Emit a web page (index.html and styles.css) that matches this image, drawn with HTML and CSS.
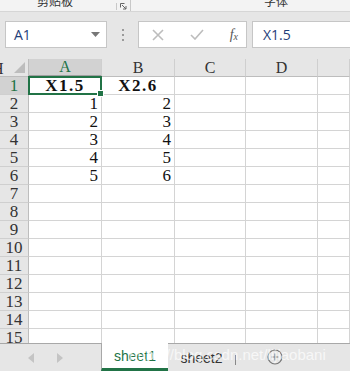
FILE: index.html
```html
<!DOCTYPE html>
<html lang="zh-CN">
  <head>
    <meta charset="UTF-8" />
    <meta name="viewport" content="width=device-width, initial-scale=1.0" />
    <title>Excel</title>
    <link rel="stylesheet" href="styles.css">
  </head>
  <body>
    <div class="app">
      <!-- Ribbon (cut off at the top) -->
      <div class="ribbon">
        <span class="ribbon__group ribbon__group--clip">剪贴板</span>
        <span class="ribbon__launcher">
          <svg width="7" height="7" viewBox="0 0 7 7"><path d="M0.5 0.5h4M0.5 0.5v4M2 2l4 4M6 3v3H3" fill="none" stroke="#666" stroke-width="1"/></svg>
        </span>
        <span class="ribbon__sep"></span>
        <span class="ribbon__group ribbon__group--font">字体</span>
      </div>

      <!-- Name box + formula bar -->
      <div class="formula-bar">
        <div class="name-box">
          <span class="name-box__text">A1</span>
          <svg class="name-box__arrow" width="9" height="5" viewBox="0 0 9 5"><path d="M0 0h9L4.5 5z" fill="#777"/></svg>
        </div>
        <div class="formula-bar__grip">
          <span></span><span></span><span></span>
        </div>
        <div class="formula-bar__buttons">
          <svg width="12" height="12" viewBox="0 0 12 12"><path d="M1 1l10 10M11 1L1 11" stroke="#bdbdbd" stroke-width="1.6"/></svg>
          <svg width="14" height="11" viewBox="0 0 14 11"><path d="M1 6l4 4 8-9" fill="none" stroke="#bdbdbd" stroke-width="1.6"/></svg>
          <span class="formula-bar__fx">f<sub>x</sub></span>
        </div>
        <div class="formula-bar__input">X1.5</div>
      </div>

      <!-- Grid -->
      <div class="sheet">
        <div class="sheet__corner"><span class="sheet__clip">H</span><span class="sheet__triangle"></span></div>
        <div class="sheet__col sheet__col--active">A</div>
        <div class="sheet__col">B</div>
        <div class="sheet__col">C</div>
        <div class="sheet__col">D</div>
        <div class="sheet__col"></div>

        <div class="sheet__row sheet__row--active">1</div>
        <div class="sheet__cell sheet__cell--head sheet__cell--selected">X1.5</div>
        <div class="sheet__cell sheet__cell--head">X2.6</div>
        <div class="sheet__cell"></div><div class="sheet__cell"></div><div class="sheet__cell"></div>

        <div class="sheet__row">2</div>
        <div class="sheet__cell">1</div><div class="sheet__cell">2</div>
        <div class="sheet__cell"></div><div class="sheet__cell"></div><div class="sheet__cell"></div>

        <div class="sheet__row">3</div>
        <div class="sheet__cell">2</div><div class="sheet__cell">3</div>
        <div class="sheet__cell"></div><div class="sheet__cell"></div><div class="sheet__cell"></div>

        <div class="sheet__row">4</div>
        <div class="sheet__cell">3</div><div class="sheet__cell">4</div>
        <div class="sheet__cell"></div><div class="sheet__cell"></div><div class="sheet__cell"></div>

        <div class="sheet__row">5</div>
        <div class="sheet__cell">4</div><div class="sheet__cell">5</div>
        <div class="sheet__cell"></div><div class="sheet__cell"></div><div class="sheet__cell"></div>

        <div class="sheet__row">6</div>
        <div class="sheet__cell">5</div><div class="sheet__cell">6</div>
        <div class="sheet__cell"></div><div class="sheet__cell"></div><div class="sheet__cell"></div>

        <div class="sheet__row">7</div>
        <div class="sheet__cell"></div><div class="sheet__cell"></div><div class="sheet__cell"></div><div class="sheet__cell"></div><div class="sheet__cell"></div>
        <div class="sheet__row">8</div>
        <div class="sheet__cell"></div><div class="sheet__cell"></div><div class="sheet__cell"></div><div class="sheet__cell"></div><div class="sheet__cell"></div>
        <div class="sheet__row">9</div>
        <div class="sheet__cell"></div><div class="sheet__cell"></div><div class="sheet__cell"></div><div class="sheet__cell"></div><div class="sheet__cell"></div>
        <div class="sheet__row">10</div>
        <div class="sheet__cell"></div><div class="sheet__cell"></div><div class="sheet__cell"></div><div class="sheet__cell"></div><div class="sheet__cell"></div>
        <div class="sheet__row">11</div>
        <div class="sheet__cell"></div><div class="sheet__cell"></div><div class="sheet__cell"></div><div class="sheet__cell"></div><div class="sheet__cell"></div>
        <div class="sheet__row">12</div>
        <div class="sheet__cell"></div><div class="sheet__cell"></div><div class="sheet__cell"></div><div class="sheet__cell"></div><div class="sheet__cell"></div>
        <div class="sheet__row">13</div>
        <div class="sheet__cell"></div><div class="sheet__cell"></div><div class="sheet__cell"></div><div class="sheet__cell"></div><div class="sheet__cell"></div>
        <div class="sheet__row">14</div>
        <div class="sheet__cell"></div><div class="sheet__cell"></div><div class="sheet__cell"></div><div class="sheet__cell"></div><div class="sheet__cell"></div>
        <div class="sheet__row">15</div>
        <div class="sheet__cell"></div><div class="sheet__cell"></div><div class="sheet__cell"></div><div class="sheet__cell"></div><div class="sheet__cell"></div>
      </div>

      <!-- Sheet tabs -->
      <div class="tabs">
        <div class="tabs__nav">
          <svg width="6" height="10" viewBox="0 0 6 10"><path d="M6 0v10L0 5z" fill="#c4c4c4"/></svg>
          <svg width="6" height="10" viewBox="0 0 6 10"><path d="M0 0v10l6-5z" fill="#c4c4c4"/></svg>
        </div>
        <div class="tabs__tab tabs__tab--active">sheet1</div>
        <div class="tabs__tab">sheet2</div>
        <span class="tabs__sep"></span>
        <svg class="tabs__add" width="16" height="16" viewBox="0 0 16 16"><circle cx="8" cy="8" r="7" fill="none" stroke="#777" stroke-width="1.2"/><path d="M8 4.5v7M4.5 8h7" stroke="#777" stroke-width="1.2"/></svg>
        <span class="tabs__watermark">https://blog.csdn.net/lijiaobani</span>
      </div>
    </div>
  </body>
</html>
```

FILE: styles.css
```css
/* Tổng quan */
html,
body {
  margin: 0;
  padding: 0;
}

body {
  width: 350px;
  height: 371px;
  overflow: hidden;
  background-color: #fff;
  font-family: "Liberation Sans", Arial, sans-serif;
}

.app {
  display: flex;
  flex-direction: column;
  height: 371px;
}

/* Ribbon */
.ribbon {
  display: flex;
  align-items: flex-end;
  height: 11px;
  overflow: hidden;
  background-color: #f3f3f3;
  border-bottom: 1px solid #d6d6d6;
  flex-shrink: 0;
}

.ribbon__group {
  margin-bottom: 3px;
  font-family: "Noto Sans CJK SC", sans-serif;
  font-size: 12px;
  line-height: 15px;
  color: #333;
  flex-shrink: 0;
}

.ribbon__group--clip {
  margin-left: 37px;
}

.ribbon__launcher {
  display: flex;
  margin-left: 43px;
  margin-bottom: 1px;
  padding-left: 3px;
  border-left: 1px solid #c8c8c8;
}

.ribbon__sep {
  width: 1px;
  height: 11px;
  margin-left: 3px;
  background-color: #c8c8c8;
}

.ribbon__group--font {
  margin-left: 133px;
}

/* Formula bar */
.formula-bar {
  display: flex;
  align-items: stretch;
  padding: 9px 0 11px 5px;
  background-color: #e6e6e6;
  flex-shrink: 0;
}

.name-box {
  display: flex;
  align-items: center;
  justify-content: space-between;
  box-sizing: border-box;
  width: 102px;
  height: 27px;
  padding: 0 6px 0 8px;
  background-color: #fff;
  border: 1px solid #c6c6c6;
}

.name-box__text {
  font-family: "Open Sans", "Liberation Sans", sans-serif;
  font-size: 14px;
  color: #1f3d7a;
}

.formula-bar__grip {
  display: flex;
  flex-direction: column;
  align-items: center;
  justify-content: center;
  gap: 3px;
  width: 31px;
}

.formula-bar__grip span {
  width: 2px;
  height: 2px;
  background-color: #9a9a9a;
}

.formula-bar__buttons {
  display: flex;
  align-items: center;
  justify-content: space-between;
  box-sizing: border-box;
  width: 109px;
  padding: 0 8px 0 13px;
  background-color: #fff;
  border: 1px solid #c6c6c6;
}

.formula-bar__fx {
  font-family: "Liberation Serif", serif;
  font-style: italic;
  font-size: 14px;
  color: #555;
}

.formula-bar__fx sub {
  font-size: 10px;
  vertical-align: -1px;
}

.formula-bar__input {
  display: flex;
  align-items: center;
  flex: 1;
  margin-left: 5px;
  padding-left: 10px;
  background-color: #fff;
  border: 1px solid #c6c6c6;
  border-right: none;
  font-family: "Open Sans", "Liberation Sans", sans-serif;
  font-size: 14px;
  color: #1f3d7a;
}

/* Lưới bảng tính */
.sheet {
  display: grid;
  grid-template-columns: 29px 73px 73px 71px 72px 1fr;
  grid-auto-rows: 18px;
  height: 284px;
  overflow: hidden;
  flex-shrink: 0;
  font-family: "Liberation Serif", "Times New Roman", serif;
}

.sheet__corner {
  position: relative;
  box-sizing: border-box;
  background-color: #e6e6e6;
  border-right: 1px solid #bdbdbd;
  border-bottom: 1px solid #bdbdbd;
  overflow: hidden;
}

.sheet__clip {
  position: absolute;
  left: -8px;
  top: 1px;
  font-size: 16px;
  color: #333;
}

.sheet__triangle {
  position: absolute;
  right: 3px;
  bottom: 3px;
  width: 0;
  height: 0;
  border-left: 11px solid transparent;
  border-bottom: 11px solid #bdbdbd;
}

.sheet__col {
  display: flex;
  align-items: center;
  justify-content: center;
  box-sizing: border-box;
  background-color: #e6e6e6;
  border-right: 1px solid #cfcfcf;
  border-bottom: 1px solid #bdbdbd;
  font-size: 16px;
  color: #333;
}

.sheet__col--active {
  background-color: #d2d2d2;
  border-bottom: 2px solid #9f9f9f;
  color: #217346;
}

.sheet__row {
  display: flex;
  align-items: center;
  justify-content: center;
  box-sizing: border-box;
  background-color: #e6e6e6;
  border-right: 1px solid #bdbdbd;
  border-bottom: 1px solid #cfcfcf;
  font-size: 17px;
  color: #333;
}

.sheet__row--active {
  background-color: #d2d2d2;
  color: #217346;
}

.sheet__cell {
  display: flex;
  align-items: center;
  justify-content: flex-end;
  box-sizing: border-box;
  padding-right: 3px;
  border-right: 1px solid #d4d4d4;
  border-bottom: 1px solid #d4d4d4;
  font-size: 17px;
  color: #111;
}

.sheet__cell--head {
  justify-content: center;
  padding-right: 0;
  font-weight: bold;
  letter-spacing: 1.5px;
}

.sheet__cell--selected {
  position: relative;
  border: 2px solid #217346;
  margin: -1px 0 0 -1px;
}

.sheet__cell--selected::after {
  content: "";
  position: absolute;
  right: -4px;
  bottom: -4px;
  width: 5px;
  height: 5px;
  background-color: #217346;
  border: 1px solid #fff;
}

/* Thanh tab sheet */
.tabs {
  position: relative;
  display: flex;
  align-items: stretch;
  flex: 1;
  background-color: #e6e6e6;
  border-top: 1px solid #a8a8a8;
}

.tabs__nav {
  display: flex;
  align-items: center;
  gap: 23px;
  width: 73px;
  padding-left: 28px;
}

.tabs__tab {
  display: flex;
  align-items: center;
  justify-content: center;
  width: 67px;
  box-sizing: border-box;
  font-size: 14px;
  color: #333;
}

.tabs__tab--active {
  margin-top: -1px;
  background-color: #fff;
  border-left: 1px solid #a8a8a8;
  border-bottom: 3px solid #217346;
  color: #217346;
}

.tabs__sep {
  align-self: center;
  width: 1px;
  height: 10px;
  margin: 4px 0 0 0;
  background-color: #888;
}

.tabs__add {
  align-self: center;
  margin-left: 31px;
  margin-top: -2px;
}

.tabs__watermark {
  position: absolute;
  left: 129px;
  top: 2px;
  font-size: 15px;
  color: rgba(255, 255, 255, 0.7);
  white-space: nowrap;
}
```
